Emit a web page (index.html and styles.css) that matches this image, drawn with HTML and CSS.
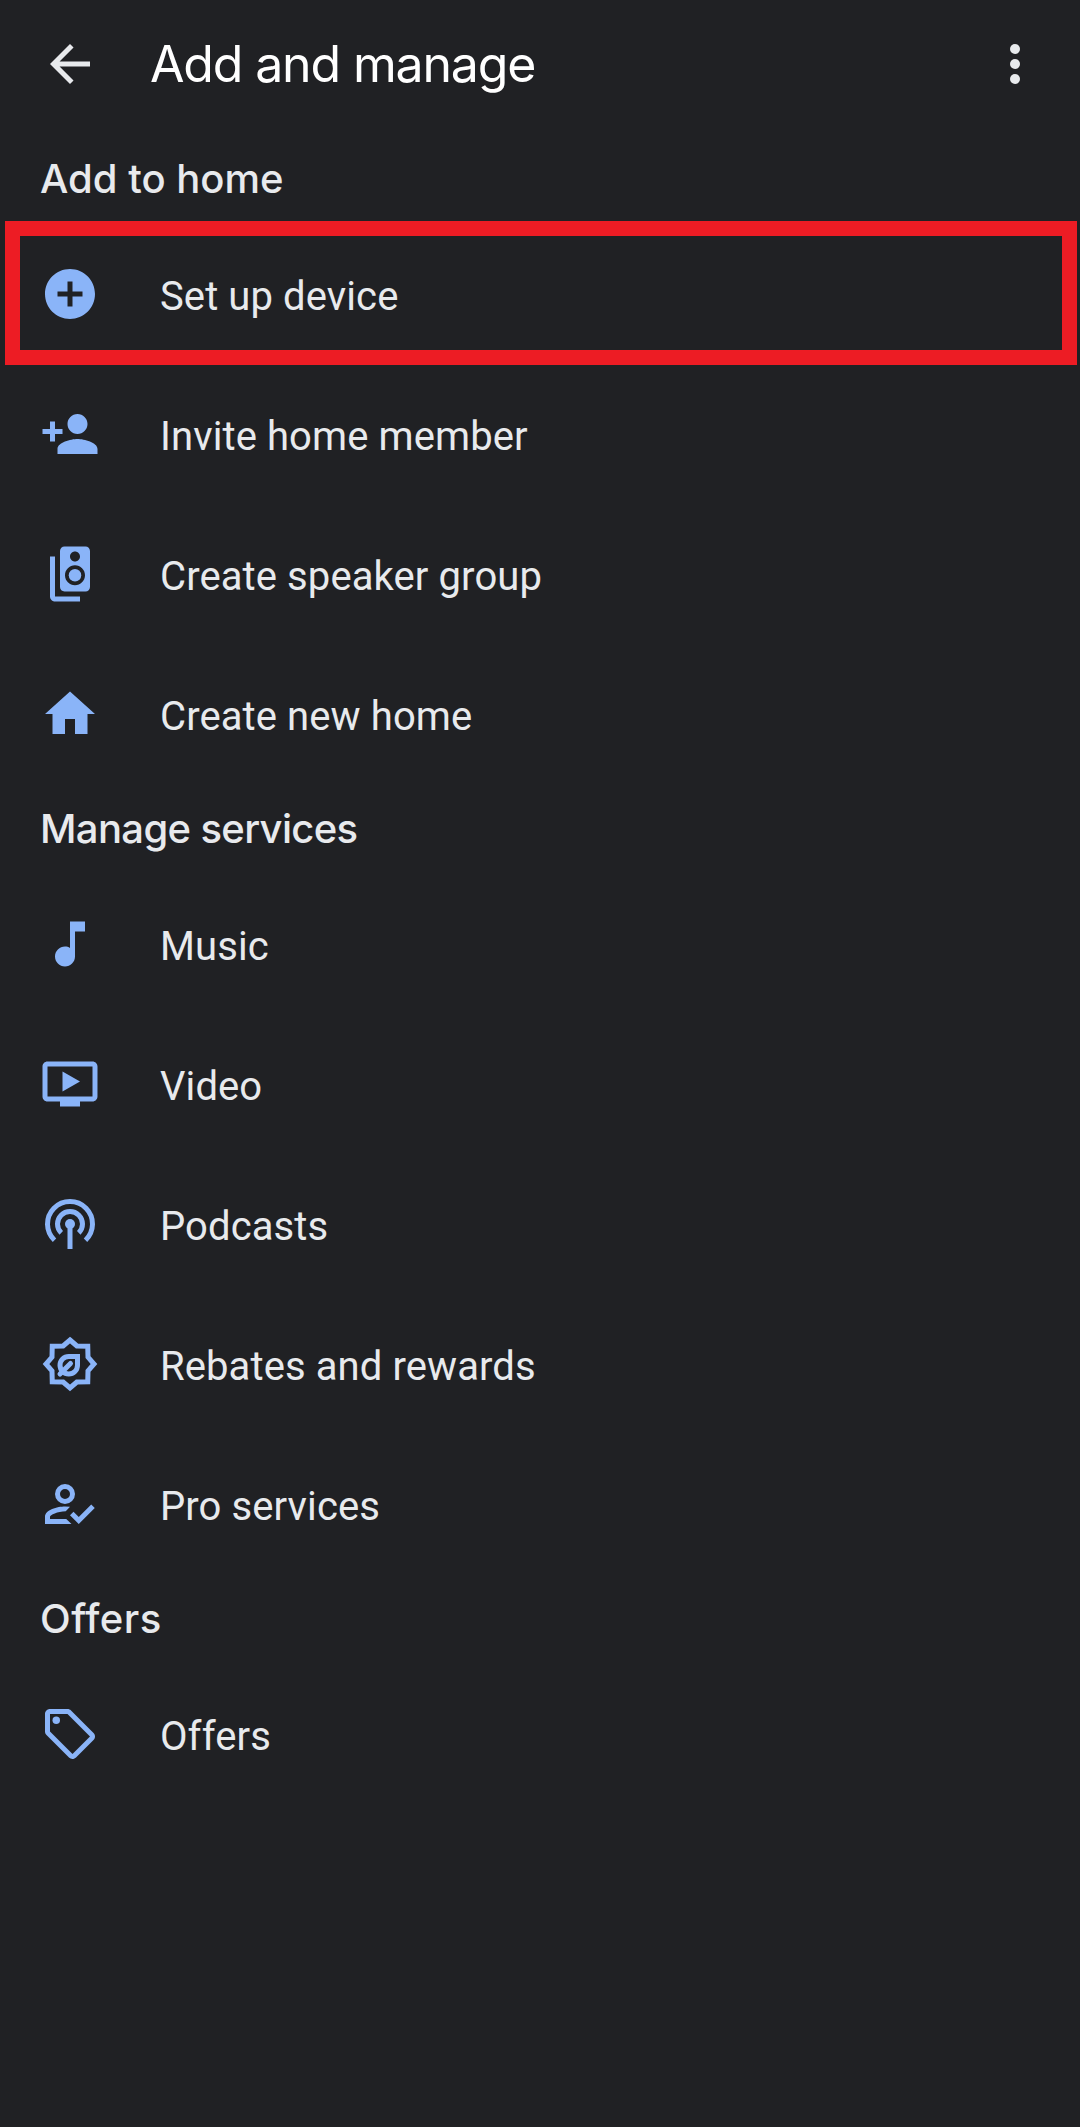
FILE: index.html
```html
<!DOCTYPE html>
<html lang="en">
<head>
<meta charset="utf-8">
<title>Add and manage</title>
<link rel="stylesheet" href="styles.css">
</head>
<body>
<header class="app-bar">
  <svg class="icon icon-light" viewBox="0 0 24 24"><path d="M20 11H7.83l5.59-5.59L12 4l-8 8 8 8 1.41-1.41L7.83 13H20v-2z"/></svg>
  <h1 class="title">Add and manage</h1>
  <svg class="icon icon-light" viewBox="0 0 24 24"><circle cx="12" cy="6" r="2"/><circle cx="12" cy="12" r="2"/><circle cx="12" cy="18" r="2"/></svg>
</header>
<main>
  <section>
    <h2 class="heading">Add to home</h2>
    <ul class="list">
      <li class="row row-highlighted">
        <svg class="icon" viewBox="0 0 24 24"><path d="M12 2C6.48 2 2 6.48 2 12s4.48 10 10 10 10-4.48 10-10S17.52 2 12 2zm5 11h-4v4h-2v-4H7v-2h4V7h2v4h4v2z"/></svg>
        <span class="label">Set up device</span>
      </li>
      <li class="row">
        <svg class="icon" viewBox="0 0 24 24"><path d="M15 12c2.21 0 4-1.79 4-4s-1.79-4-4-4-4 1.79-4 4 1.79 4 4 4zm-9-2V7H4v3H1v2h3v3h2v-3h3v-2H6zm9 4c-2.67 0-8 1.34-8 4v2h16v-2c0-2.66-5.33-4-8-4z"/></svg>
        <span class="label">Invite home member</span>
      </li>
      <li class="row">
        <svg class="icon" viewBox="0 0 24 24"><path d="M18.2 1H9.8C8.81 1 8 1.81 8 2.8v14.4c0 .99.81 1.79 1.8 1.79l8.4.01c.99 0 1.8-.81 1.8-1.8V2.8c0-.99-.81-1.8-1.8-1.8zM14 3c1.1 0 2 .89 2 2s-.9 2-2 2-2-.89-2-2 .9-2 2-2zm0 13.5c-2.21 0-4-1.79-4-4s1.79-4 4-4 4 1.79 4 4-1.79 4-4 4z"/><circle cx="14" cy="12.5" r="2.5"/><path d="M6 5H4v16c0 1.1.89 2 2 2h10v-2H6V5z"/></svg>
        <span class="label">Create speaker group</span>
      </li>
      <li class="row">
        <svg class="icon" viewBox="0 0 24 24"><path d="M10 20v-6h4v6h5v-8h3L12 3 2 12h3v8z"/></svg>
        <span class="label">Create new home</span>
      </li>
    </ul>
  </section>
  <section>
    <h2 class="heading heading-tight">Manage services</h2>
    <ul class="list">
      <li class="row">
        <svg class="icon" viewBox="0 0 24 24"><path d="M12 3v10.55c-.59-.34-1.27-.55-2-.55-2.21 0-4 1.79-4 4s1.79 4 4 4 4-1.79 4-4V7h4V3h-6z"/></svg>
        <span class="label">Music</span>
      </li>
      <li class="row">
        <svg class="icon" viewBox="0 0 24 24"><path d="M21 3H3c-1.11 0-2 .89-2 2v12c0 1.1.89 2 2 2h5v2h8v-2h5c1.1 0 1.99-.9 1.99-2L23 5c0-1.11-.9-2-2-2zm0 14H3V5h18v12zm-5-6l-7 4V7z"/></svg>
        <span class="label">Video</span>
      </li>
      <li class="row">
        <svg class="icon" viewBox="0 0 24 24"><circle cx="12" cy="12" r="2"/><path d="M11 12h2v10h-2z"/><path class="stroke" d="M5.8 18.5A9 9 0 1 1 18.2 18.5M8.5 15.55A5 5 0 1 1 15.5 15.55"/></svg>
        <span class="label">Podcasts</span>
      </li>
      <li class="row">
        <svg class="icon" viewBox="0 0 24 24"><path class="stroke" d="M12 2.4L14.75 4.8L19.1 4.9L19.2 9.25L21.6 12L19.2 14.75L19.1 19.1L14.75 19.2L12 21.6L9.25 19.2L4.9 19.1L4.8 14.75L2.4 12L4.8 9.25L4.9 4.9L9.25 4.8Z"/><path class="stroke" d="M15 9H11.5A3.5 3.5 0 1 0 15 12.5Z"/><path class="stroke stroke-round" d="M12.2 11.8L8 16"/></svg>
        <span class="label">Rebates and rewards</span>
      </li>
      <li class="row">
        <svg class="icon" viewBox="0 0 24 24"><path class="stroke" d="M13 8a3 3 0 1 1-6 0a3 3 0 1 1 6 0z"/><path d="M12 13.1Q11 13 10 13C7 13 2 14.3 2 17.2V20H12.6L10.5 18H4V17.2C4 16.3 7 15 10.3 14.9Z"/><path class="stroke" d="M12.7 15.8L15.5 18.6L21.2 12.9"/></svg>
        <span class="label">Pro services</span>
      </li>
    </ul>
  </section>
  <section>
    <h2 class="heading heading-wide">Offers</h2>
    <ul class="list">
      <li class="row">
        <svg class="icon" viewBox="0 0 24 24"><path d="M21.41 11.58l-9-9C12.05 2.22 11.55 2 11 2H4c-1.1 0-2 .9-2 2v7c0 .55.22 1.05.59 1.42l9 9c.36.36.86.58 1.41.58s1.05-.22 1.41-.59l7-7c.37-.36.59-.86.59-1.41s-.23-1.06-.59-1.42zM13 20.01L4 11V4h7v-.01l9 9-7 7.02z"/><circle cx="6.5" cy="6.5" r="1.5"/></svg>
        <span class="label">Offers</span>
      </li>
    </ul>
  </section>
</main>
</body>
</html>
```
FILE: styles.css
```css
* {
  box-sizing: border-box;
}

body {
  margin: 0;
  min-height: 100vh;
  background: #202124;
  color: #e8eaed;
  font-family: Roboto, sans-serif;
}

.app-bar {
  display: flex;
  align-items: center;
  height: 134px;
  padding: 0 35px 6px 40px;
}

.icon {
  flex: none;
  width: 60px;
  height: 60px;
  fill: #8ab4f8;
}

.icon-light {
  fill: #e8eaed;
}

.stroke {
  fill: none;
  stroke: #8ab4f8;
  stroke-width: 2;
}

.stroke-round {
  stroke-linecap: round;
}

.title {
  flex: 1;
  margin: 0 0 0 50px;
  color: #fff;
  font: 400 50px/60px Inter, sans-serif;
  letter-spacing: -1.15px;
}

.heading {
  height: 90px;
  margin: 0;
  padding-left: 40px;
  font: 500 40px/90px Inter, sans-serif;
}

.heading-tight {
  letter-spacing: -0.65px;
}

.heading-wide {
  letter-spacing: 0.5px;
}

.list {
  margin: 0;
  padding: 0;
  list-style: none;
}

.row {
  position: relative;
  display: flex;
  align-items: center;
  gap: 60px;
  height: 140px;
  padding-left: 40px;
}

.row-highlighted::after {
  content: "";
  position: absolute;
  inset: -3px 3px -1px 5px;
  border: 15px solid #ed1c24;
}

.label {
  padding-top: 5px;
  font-size: 40px;
  line-height: 48px;
  letter-spacing: 0.1px;
}
```
